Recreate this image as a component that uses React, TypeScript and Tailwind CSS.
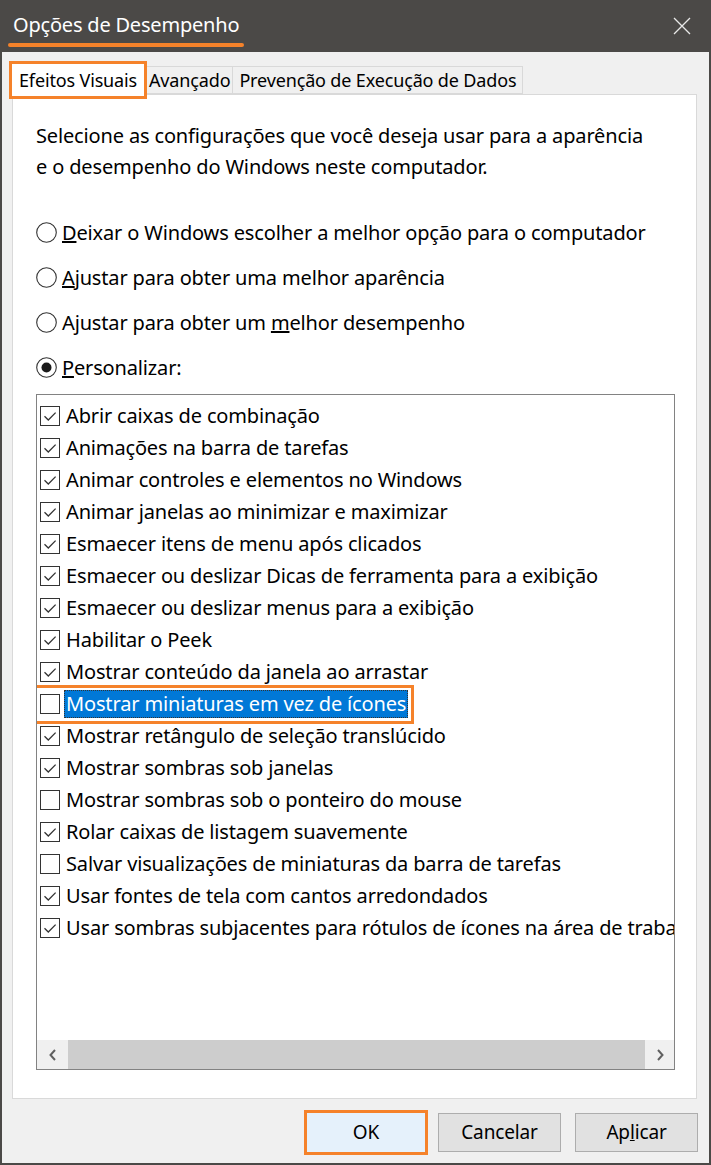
import React from "react";

const items: { label: string; checked: boolean }[] = [
  { label: "Abrir caixas de combinação", checked: true },
  { label: "Animações na barra de tarefas", checked: true },
  { label: "Animar controles e elementos no Windows", checked: true },
  { label: "Animar janelas ao minimizar e maximizar", checked: true },
  { label: "Esmaecer itens de menu após clicados", checked: true },
  { label: "Esmaecer ou deslizar Dicas de ferramenta para a exibição", checked: true },
  { label: "Esmaecer ou deslizar menus para a exibição", checked: true },
  { label: "Habilitar o Peek", checked: true },
  { label: "Mostrar conteúdo da janela ao arrastar", checked: true },
  { label: "Mostrar miniaturas em vez de ícones", checked: false },
  { label: "Mostrar retângulo de seleção translúcido", checked: true },
  { label: "Mostrar sombras sob janelas", checked: true },
  { label: "Mostrar sombras sob o ponteiro do mouse", checked: false },
  { label: "Rolar caixas de listagem suavemente", checked: true },
  { label: "Salvar visualizações de miniaturas da barra de tarefas", checked: false },
  { label: "Usar fontes de tela com cantos arredondados", checked: true },
  { label: "Usar sombras subjacentes para rótulos de ícones na área de trabalho", checked: true },
];

function Check({ checked }: { checked: boolean }) {
  return (
    <svg width="20" height="20" viewBox="0 0 20 20" className="shrink-0">
      <rect x="0.5" y="0.5" width="19" height="19" fill="#fff" stroke="#333" />
      {checked && <path d="M4.5 10.2 L8.3 14 L15.6 6.6" fill="none" stroke="#333" strokeWidth="1.3" />}
    </svg>
  );
}

function Radio({ on }: { on?: boolean }) {
  return (
    <svg width="21" height="21" viewBox="0 0 21 21" className="shrink-0">
      <circle cx="10.5" cy="10.5" r="9.8" fill="#fff" stroke="#333" strokeWidth="1.1" />
      {on && <circle cx="10.5" cy="10.5" r="5" fill="#1a1a1a" />}
    </svg>
  );
}

export default function App() {
  return (
    <div
      className="flex h-[1165px] w-[711px] flex-col bg-[#4b4947] px-[2px] pb-[2px] text-[20px] tracking-[-0.15px] text-black"
      style={{ fontFamily: '"Segoe UI", "Noto Sans", sans-serif' }}
    >
      {/* title bar */}
      <div className="flex h-[52px] shrink-0 items-center justify-between pl-[11px] pr-[18px]">
        <div className="relative pb-[2px] text-[20px] leading-none tracking-[-0.2px] text-white">
          Opções de Desempenho
          <div className="absolute -left-[5px] -right-[5px] top-[28px] h-[4px] rounded-full bg-[#f5822a]" />
        </div>
        <svg width="18" height="18" viewBox="0 0 18 18">
          <path d="M1 1 L17 17 M17 1 L1 17" stroke="#e8e8e8" strokeWidth="1.3" />
        </svg>
      </div>

      {/* body */}
      <div className="flex flex-1 flex-col bg-[#f0f0f0] pl-[10px] pr-[12px] pt-[9px]">
        {/* tabs */}
        <div className="relative z-10 flex h-[33px] items-start text-[18px] leading-none">
          <div className="-ml-[3px] flex h-[38px] w-[138px] items-center justify-center border-[3px] border-[#f5822a] bg-white">
            Efeitos Visuais
          </div>
          <div className="mt-[5px] flex h-[28px] items-center border-y border-r border-[#d9d9d9] px-[2px]">Avançado</div>
          <div className="mt-[5px] flex h-[28px] items-center border-y border-r border-[#d9d9d9] px-[6px]">
            Prevenção de Execução de Dados
          </div>
        </div>

        {/* panel */}
        <div className="flex h-[1005px] flex-col border border-[#d9d9d9] bg-white pl-[23px] pr-[21px] pt-[25px]">
          <p className="leading-[31px]">
            Selecione as configurações que você deseja usar para a aparência
            <br />e o desempenho do Windows neste computador.
          </p>

          <div className="mt-[28px] flex flex-col">
            <label className="flex h-[45px] items-center gap-[5px]">
              <Radio />
              <span>
                <u>D</u>eixar o Windows escolher a melhor opção para o computador
              </span>
            </label>
            <label className="flex h-[45px] items-center gap-[5px]">
              <Radio />
              <span>
                <u>A</u>justar para obter uma melhor aparência
              </span>
            </label>
            <label className="flex h-[45px] items-center gap-[5px]">
              <Radio />
              <span>
                Ajustar para obter um <u>m</u>elhor desempenho
              </span>
            </label>
            <label className="flex h-[45px] items-center gap-[5px]">
              <Radio on />
              <span>
                <u>P</u>ersonalizar:
              </span>
            </label>
          </div>

          {/* list box */}
          <div className="mt-[4px] flex h-[676px] w-[639px] flex-col border border-[#828282]">
            <div className="relative flex-1 overflow-hidden pl-[3px] pt-[5px]">
              {items.map((it, i) => {
                const sel = i === 9;
                return (
                  <div key={it.label} className="relative flex h-[32px] items-center whitespace-nowrap">
                    <Check checked={it.checked} />
                    <span
                      className={
                        sel
                          ? "ml-[4px] border border-dotted border-[#333] bg-[#0078d7] px-[1px] leading-[26px] text-white"
                          : "ml-[6px]"
                      }
                    >
                      {it.label}
                    </span>
                    {sel && (
                      <div className="absolute -left-[8px] -top-[3px] h-[39px] w-[382px] border-[3px] border-[#f5822a]" />
                    )}
                  </div>
                );
              })}
            </div>
            {/* horizontal scrollbar */}
            <div className="flex h-[29px] shrink-0 items-center bg-[#f0f0f0]">
              <div className="flex w-[31px] justify-center">
                <svg width="8" height="12" viewBox="0 0 8 12">
                  <path d="M6 1 L1.5 6 L6 11" fill="none" stroke="#606060" strokeWidth="2" />
                </svg>
              </div>
              <div className="h-[29px] w-[577px] bg-[#cdcdcd]" />
              <div className="flex flex-1 justify-center">
                <svg width="8" height="12" viewBox="0 0 8 12">
                  <path d="M2 1 L6.5 6 L2 11" fill="none" stroke="#606060" strokeWidth="2" />
                </svg>
              </div>
            </div>
          </div>
        </div>

        {/* buttons */}
        <div className="mt-[14px] flex justify-end text-[19px]">
          <div className="-mt-[3px] flex h-[45px] w-[124px] items-center justify-center border-[3px] border-[#f5822a] bg-[#e5f1fb]">
            OK
          </div>
          <div className="ml-[10px] flex h-[39px] w-[123px] items-center justify-center border border-[#adadad] bg-[#e1e1e1]">
            Cancelar
          </div>
          <div className="ml-[14px] mr-[-1px] flex h-[39px] w-[123px] items-center justify-center border border-[#adadad] bg-[#e1e1e1]">
            <span>
              Ap<u>l</u>icar
            </span>
          </div>
        </div>
      </div>
    </div>
  );
}
